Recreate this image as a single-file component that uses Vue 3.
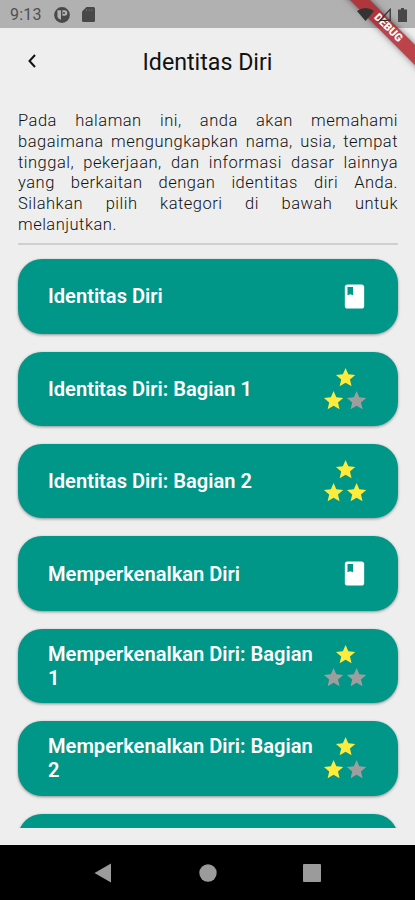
<template>
    <div class="phone">
        <header class="status">
            <span class="clock">9:13</span>
            <svg class="statusApp" viewBox="0 0 16 16">
                <circle cx="8" cy="8" r="7.9" fill="#484848" />
                <path d="M3.4 3.3H7v9.5A5 5 0 0 1 3.4 10z" fill="#b1b1b1" />
                <path d="M8.4 3.3h2.2a2.7 2.7 0 0 1 0 5.4H8.4z" fill="#b1b1b1" />
                <circle cx="10" cy="6" r="1" fill="#484848" />
            </svg>
            <svg class="statusCard" viewBox="0 0 13 15">
                <path d="M4.5 0H11.5Q13 0 13 1.5V13.5Q13 15 11.5 15H1.5Q0 15 0 13.5V4.5z" fill="#484848" />
                <path d="M4.5 2v2.4M7.2 2v2.4M9.9 2v2.4" stroke="#686868" stroke-width="1" />
            </svg>
            <div class="signals">
                <svg width="17" height="13" viewBox="0 0 17 13">
                    <path d="M0 3Q8.5-3 17 3L8.5 13z" fill="#333333" />
                </svg>
                <svg width="13" height="13" viewBox="0 0 13 13">
                    <path d="M12.2 1.4V12.3H2z" fill="none" stroke="#333333" stroke-width="1.3" />
                </svg>
                <svg width="9" height="14" viewBox="0 0 9 14">
                    <path d="M3 0h3v1.5h3V14H0V1.5h3z" fill="#484848" />
                </svg>
            </div>
        </header>

        <div class="debug"><span>DEBUG</span></div>

        <div class="appBar">
            <svg class="back" viewBox="0 0 8 14">
                <path d="M7 1L1.5 7L7 13" fill="none" stroke="#111" stroke-width="2" />
            </svg>
            <h1>Identitas Diri</h1>
        </div>

        <main>
            <p>Pada halaman ini, anda akan memahami bagaimana mengungkapkan nama, usia, tempat tinggal, pekerjaan, dan informasi dasar lainnya yang berkaitan dengan identitas diri Anda. Silahkan pilih kategori di bawah untuk melanjutkan.</p>
            <div class="list">
                <div v-for="item in categories" :key="item.title" class="card">
                    <h2>{{ item.title }}</h2>
                    <svg v-if="item.stars === null" class="book" viewBox="0 0 24 24">
                        <path d="M18 2H6c-1.1 0-2 .9-2 2v16c0 1.1.9 2 2 2h12c1.1 0 2-.9 2-2V4c0-1.1-.9-2-2-2zM6.2 4.2h4.6v6.8l-2.3-.9L6.2 11z" />
                    </svg>
                    <div v-else class="stars">
                        <svg v-for="n in 3" :key="n" :class="{ on: starOn(item.stars, n) }" viewBox="0 0 24 24">
                            <path d="M12 17.27L18.18 21l-1.64-7.03L22 9.24l-7.19-.61L12 2 9.19 8.63 2 9.24l5.46 4.73L5.82 21z" />
                        </svg>
                    </div>
                </div>
                <div class="card"></div>
            </div>
        </main>

        <nav>
            <svg viewBox="0 0 20 20"><path d="M17 .5V19.5L.5 10z" /></svg>
            <svg viewBox="0 0 20 20"><circle cx="10" cy="10" r="8.7" /></svg>
            <svg viewBox="0 0 20 20"><rect x="1" y="1" width="18" height="18" rx="1" /></svg>
        </nav>
    </div>
</template>

<script setup>
import { ref } from 'vue';

// stars: null = materi (icono de libro)
const categories = ref([
    { title: 'Identitas Diri', stars: null },
    { title: 'Identitas Diri: Bagian 1', stars: 2 },
    { title: 'Identitas Diri: Bagian 2', stars: 3 },
    { title: 'Memperkenalkan Diri', stars: null },
    { title: 'Memperkenalkan Diri: Bagian 1', stars: 1 },
    { title: 'Memperkenalkan Diri: Bagian 2', stars: 2 },
]);

const starOn = (stars, n) => n <= stars;
</script>

<style>
    body {
        margin: 0;
        background: #eeeeee;
    }
</style>

<style scoped>
    .phone {
        position: relative;
        display: flex;
        flex-direction: column;
        width: 415px;
        height: 900px;
        overflow: hidden;
        background: #eeeeee;
        font-family: Roboto, "Liberation Sans", sans-serif;
    }

    .status {
        display: flex;
        align-items: center;
        height: 28px;
        flex-shrink: 0;
        box-sizing: border-box;
        padding: 1px 8px 0 10px;
        background: #b1b1b1;
    }

    .clock {
        width: 44px;
        color: #505050;
        font-size: 16px;
        letter-spacing: 0.2px;
    }

    .statusApp {
        width: 16px;
        height: 16px;
    }

    .statusCard {
        width: 13px;
        height: 15px;
        margin-left: 12px;
    }

    /* los iconos del sistema van encima de la cinta */
    .signals {
        position: relative;
        z-index: 2;
        display: flex;
        align-items: center;
        margin-left: auto;
    }

    .signals svg:nth-child(2) {
        margin-left: 4px;
    }

    .signals svg:nth-child(3) {
        margin-left: 7px;
    }

    /* cinta de debug en la esquina */
    .debug {
        position: absolute;
        z-index: 1;
        top: 21px;
        right: -43px;
        width: 140px;
        height: 14px;
        transform: rotate(45deg);
        background: rgba(176, 24, 32, 0.8);
        box-shadow: 0 0 6px rgba(0, 0, 0, 0.5);
        color: #ffffff;
        font-size: 11px;
        font-weight: 900;
        line-height: 14px;
        text-align: center;
    }

    .appBar {
        display: grid;
        grid-template-columns: 65px 1fr 65px;
        align-items: center;
        height: 67px;
        flex-shrink: 0;
    }

    .back {
        width: 8px;
        height: 14px;
        margin-left: 28px;
        margin-top: -1px;
    }

    h1 {
        margin: 0;
        color: #111111;
        font-size: 23.2px;
        font-weight: 400;
        text-align: center;
    }

    main {
        display: flex;
        flex-direction: column;
        height: 717.6px;
        flex-shrink: 0;
        margin-top: 15px;
    }

    p {
        margin: 0 17px 0 18px;
        padding-top: 1px;
        padding-bottom: 7.3px;
        border-bottom: 2px solid #cfcfcf;
        color: #111111;
        font-size: 16.5px;
        font-weight: 300;
        letter-spacing: 0.5px;
        line-height: 20.75px;
        text-align: justify;
    }

    .list {
        display: flex;
        flex-direction: column;
        gap: 18.1px;
        flex: 1;
        min-height: 0;
        overflow: hidden;
        padding: 14.5px 17px 0 18px;
    }

    .card {
        display: flex;
        align-items: center;
        justify-content: space-between;
        box-sizing: border-box;
        height: 74.3px;
        flex-shrink: 0;
        padding: 0 29.5px 0 30px;
        border-radius: 24px;
        background: #009688;
        box-shadow: 0 1px 3px rgba(0, 0, 0, 0.4);
    }

    h2 {
        flex: 1;
        margin: 0;
        color: #ffffff;
        font-size: 20.1px;
        font-weight: 600;
        line-height: 24px;
    }

    .book {
        width: 29px;
        height: 29px;
        fill: #ffffff;
    }

    .stars {
        display: flex;
        flex-wrap: wrap;
        justify-content: center;
        width: 46.4px;
    }

    .stars svg {
        width: 23.2px;
        height: 23.2px;
        fill: #9e9e9e;
    }

    .stars svg:first-child {
        margin: 0 11.5px;
    }

    .stars svg.on {
        fill: #ffeb3b;
    }

    nav {
        display: flex;
        align-items: center;
        justify-content: center;
        gap: 84px;
        flex: 1;
        margin-top: 17.9px;
        background: #000000;
    }

    nav svg {
        width: 20px;
        height: 20px;
        fill: #9b9b9b;
    }
</style>
